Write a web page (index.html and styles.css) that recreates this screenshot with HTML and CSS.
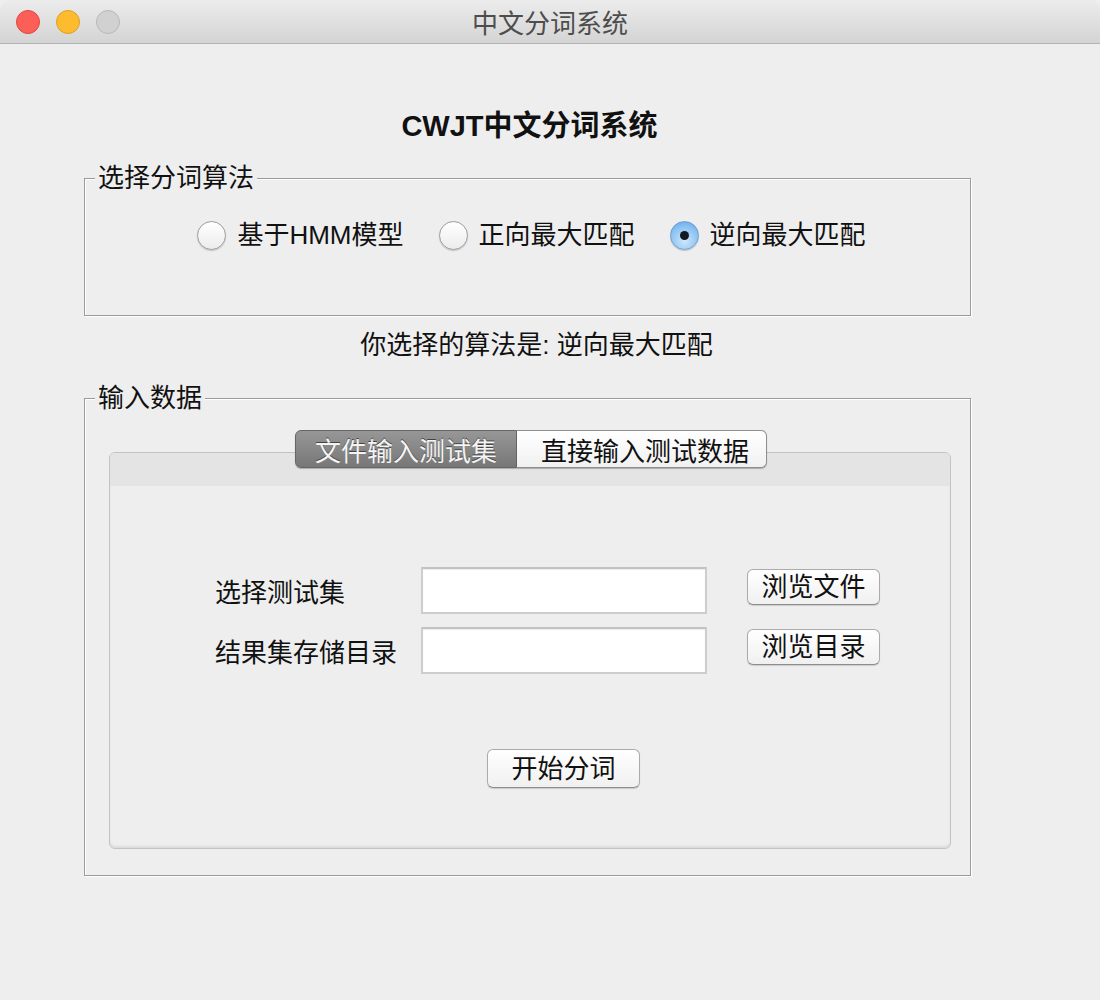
FILE: index.html
```html
<!DOCTYPE html>
<html lang="zh-CN">

<head>
  <meta charset="UTF-8" />
  <meta name="viewport" content="width=device-width, initial-scale=1.0" />
  <title>中文分词系统</title>
  <link rel="stylesheet" href="styles.css">
</head>

<body>
  <div class="janela">
    <div class="titulo">
      <div class="luzes">
        <span class="luz vermelha"></span>
        <span class="luz amarela"></span>
        <span class="luz cinza"></span>
      </div>
      <span class="titulo-texto">中文分词系统</span>
    </div>

    <div class="conteudo">
      <h1>CWJT中文分词系统</h1>

      <fieldset class="grupo grupo-algoritmo">
        <legend>选择分词算法</legend>
        <div class="opcoes">
          <label class="opcao"><input type="radio" name="algo"> 基于HMM模型</label>
          <label class="opcao"><input type="radio" name="algo"> 正向最大匹配</label>
          <label class="opcao"><input type="radio" name="algo" checked> 逆向最大匹配</label>
        </div>
      </fieldset>

      <p class="escolha">你选择的算法是: <span id="escolhido">逆向最大匹配</span></p>

      <fieldset class="grupo grupo-dados">
        <legend>输入数据</legend>
        <div class="abas">
          <button class="aba ativa">文件输入测试集</button>
          <button class="aba">直接输入测试数据</button>
        </div>
        <div class="painel">
          <div class="faixa"></div>
          <div class="painel-corpo">
            <div class="formulario">
              <span class="rotulo">选择测试集</span>
              <input type="text" class="campo">
              <button class="btn">浏览文件</button>

              <span class="rotulo">结果集存储目录</span>
              <input type="text" class="campo">
              <button class="btn">浏览目录</button>
            </div>
            <button class="btn btn-iniciar">开始分词</button>
          </div>
        </div>
      </fieldset>
    </div>
  </div>

  <script>
    // atualiza o texto do algoritmo escolhido
    document.querySelectorAll('.opcao input').forEach(function (radio) {
      radio.addEventListener('change', function () {
        document.getElementById('escolhido').textContent = radio.parentElement.textContent.trim();
      });
    });
  </script>
</body>

</html>
```

FILE: styles.css
```css
body {
  margin: 0;
  font-family: "Liberation Sans", "Noto Sans CJK SC", sans-serif;
  color: #111;
}

.janela {
  width: 1100px;
  height: 1000px;
  background-color: #eeeeee;
  overflow: hidden;
}

.titulo {
  height: 43px;
  border-bottom: 1px solid #b3b3b3;
  background: linear-gradient(#ececec, #d4d4d4);
  border-radius: 10px 10px 0 0;
  display: flex;
  align-items: center;
  justify-content: center;
  position: relative;
}

.luzes {
  position: absolute;
  left: 16px;
  top: 10px;
  display: flex;
  gap: 16px;
}

.luz {
  width: 22px;
  height: 22px;
  border-radius: 50%;
  border: 1px solid;
}

.vermelha {
  background-color: #fc5f57;
  border-color: #df4740;
}

.amarela {
  background-color: #fdbc2e;
  border-color: #de9e25;
}

.cinza {
  background-color: #d1d1d1;
  border-color: #b8b8b8;
}

.titulo-texto {
  font-size: 26px;
  color: #4d4d4d;
}

.conteudo {
  margin-left: 84px;
  width: 887px;
}

h1 {
  margin: 65px 0 0;
  font-size: 29px;
  line-height: 34px;
  text-align: center;
  padding-left: 4px;
}

.grupo {
  margin: 0;
  padding: 0;
  border: 1px solid #9a9a9a;
  box-shadow: 1px 1px 0 #ffffff, inset 1px 1px 0 #ffffff;
  min-width: 0;
}

.grupo legend {
  margin-left: 10px;
  padding: 0 3px;
  font-size: 26px;
  line-height: 30px;
  background-color: #eeeeee;
}

.grupo-algoritmo {
  margin-top: 20px;
  padding: 27px 0 65px;
}

.opcoes {
  display: flex;
  justify-content: center;
  gap: 35px;
  padding-left: 8px;
}

.opcao {
  display: flex;
  align-items: center;
  gap: 11px;
  font-size: 26px;
  line-height: 30px;
}

.opcao input {
  appearance: none;
  margin: 0;
  width: 29px;
  height: 29px;
  border-radius: 50%;
  border: 1px solid #9b9b9b;
  background: linear-gradient(#ffffff, #ececec);
  box-shadow: 0 1px 1px rgba(0, 0, 0, 0.18);
  display: grid;
  place-items: center;
}

.opcao input:checked {
  border-color: #6d9fd0;
  background: radial-gradient(circle at 50% 70%, #cfe6fb, #8cc3f2 60%, #5aa2e8);
}

.opcao input:checked::after {
  content: "";
  width: 9px;
  height: 9px;
  border-radius: 50%;
  background-color: #101820;
}

.escolha {
  margin: 14px 0 0;
  font-size: 26px;
  line-height: 30px;
  text-align: center;
  padding-left: 18px;
}

.grupo-dados {
  margin-top: 23px;
  padding: 17px 0 26px;
}

.abas {
  display: flex;
  justify-content: center;
  width: 842px;
  margin-left: 25px;
  position: relative;
  z-index: 1;
}

.aba {
  height: 38px;
  margin: 0;
  padding: 0 19px;
  font-family: inherit;
  font-size: 26px;
  border: 1px solid #8e8e8e;
  background: linear-gradient(#ffffff, #f1f1f1);
  color: #111;
  box-shadow: 0 1px 1px rgba(0, 0, 0, 0.25);
}

.aba.ativa {
  border-color: #666666;
  border-radius: 6px 0 0 6px;
  background: linear-gradient(#979797, #777777);
  color: #f4f4f4;
  text-shadow: 0 -1px 0 #444444;
}

.aba:last-child {
  border-left: none;
  border-radius: 0 6px 6px 0;
  padding: 0 17px 0 24px;
}

.painel {
  width: 842px;
  margin: -16px 0 0 24px;
  border: 1px solid #c3c3c3;
  border-radius: 6px;
  box-sizing: border-box;
  box-shadow: inset 0 -2px 2px rgba(0, 0, 0, 0.08);
  overflow: hidden;
}

.faixa {
  height: 33px;
  background-color: #e4e4e4;
}

.painel-corpo {
  padding: 81px 0 60px;
}

.formulario {
  display: grid;
  grid-template-columns: 166px 286px 133px;
  grid-auto-rows: 47px;
  column-gap: 40px;
  row-gap: 13px;
  margin-left: 105px;
}

.rotulo {
  font-size: 26px;
  align-self: center;
  white-space: nowrap;
}

.campo {
  margin: 0;
  height: 47px;
  box-sizing: border-box;
  border: 2px solid #cdcdcd;
  border-top-color: #c2c2c2;
  background-color: #ffffff;
  box-shadow: inset 0 1px 1px rgba(0, 0, 0, 0.08);
}

.btn {
  margin: 0;
  height: 36px;
  font-family: inherit;
  font-size: 26px;
  line-height: 30px;
  color: #111;
  padding: 0;
  border: 1px solid #ababab;
  border-bottom-color: #8d8d8d;
  border-radius: 6px;
  background: linear-gradient(#ffffff, #f0f0f0);
  box-shadow: 0 1px 1px rgba(0, 0, 0, 0.15);
  cursor: pointer;
}

.formulario .btn {
  margin-top: 2px;
}

.btn-iniciar {
  display: block;
  margin: 75px 0 0 377px;
  width: 153px;
  height: 39px;
}
```
